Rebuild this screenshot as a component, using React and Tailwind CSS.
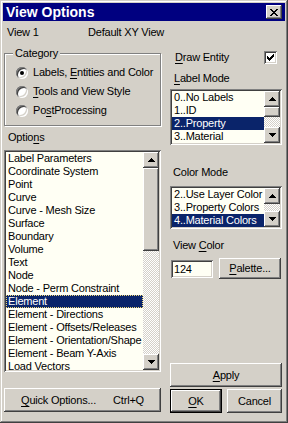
import React from 'react';

const RAISED =
  'shadow-[inset_-1px_-1px_#404040,inset_1px_1px_#ffffff,inset_-2px_-2px_#808080,inset_2px_2px_#d4d0c8]';
const SUNKEN =
  'shadow-[inset_1px_1px_#808080,inset_-1px_-1px_#ffffff,inset_2px_2px_#404040,inset_-2px_-2px_#d4d0c8]';
const CHECKER =
  'bg-[repeating-conic-gradient(#d4d0c8_0_25%,#ffffff_0_50%)] bg-[length:2px_2px]';

function Arrow({ dir }) {
  const rows = dir === 'up' ? [[3, 0, 1], [2, 1, 3], [1, 2, 5], [0, 3, 7]] : [[0, 0, 7], [1, 1, 5], [2, 2, 3], [3, 3, 1]];
  return (
    <svg width="7" height="4" viewBox="0 0 7 4" shapeRendering="crispEdges">
      {rows.map(([x, y, w]) => (
        <rect key={y} x={x} y={y} width={w} height="1" fill="#000" />
      ))}
    </svg>
  );
}

function ScrollBtn({ dir }) {
  return (
    <div className={`w-[16px] h-[16px] shrink-0 bg-[#d4d0c8] flex items-center justify-center ${RAISED}`}>
      <Arrow dir={dir} />
    </div>
  );
}

function ScrollBar({ thumb }) {
  return (
    <div className="w-[16px] flex flex-col shrink-0">
      <ScrollBtn dir="up" />
      {thumb > 0 && <div className={`w-[16px] bg-[#d4d0c8] shrink-0 ${RAISED}`} style={{ height: thumb }} />}
      <div className={`flex-1 ${CHECKER}`} />
      <ScrollBtn dir="down" />
    </div>
  );
}

function ListBox({ items, sel, focus, height, thumb }) {
  return (
    <div className={`bg-[#fffff4] p-[2px] flex ${SUNKEN}`} style={{ height }}>
      <div className="flex-1 overflow-hidden">
        {items.map((t) => (
          <div
            key={t}
            className={`h-[13px] leading-[13px] pl-[2px] whitespace-nowrap ${
              t === sel ? 'bg-[#0a246a] text-white' : 'text-black'
            } ${t === sel && focus ? 'outline-1 outline-dotted -outline-offset-1 outline-[#f0d878]' : ''}`}
          >
            {t}
          </div>
        ))}
      </div>
      <ScrollBar thumb={thumb} />
    </div>
  );
}

function Button({ children, className = '', def }) {
  return (
    <div className={`${def ? 'border border-black' : ''} ${className}`}>
      <div className={`h-full w-full bg-[#d4d0c8] flex items-center justify-center ${RAISED}`}>{children}</div>
    </div>
  );
}

function Radio({ checked, children }) {
  return (
    <div className="h-[13px] flex items-center">
      <div className={`w-[12px] h-[12px] rounded-full bg-white flex items-center justify-center ${SUNKEN}`}>
        {checked && <div className="w-[4px] h-[4px] rounded-full bg-black" />}
      </div>
      <span className="ml-[5px] leading-[13px]">{children}</span>
    </div>
  );
}

const U = ({ children }) => <span className="underline underline-offset-[2px]">{children}</span>;

const options = [
  'Label Parameters',
  'Coordinate System',
  'Point',
  'Curve',
  'Curve - Mesh Size',
  'Surface',
  'Boundary',
  'Volume',
  'Text',
  'Node',
  'Node - Perm Constraint',
  'Element',
  'Element - Directions',
  'Element - Offsets/Releases',
  'Element - Orientation/Shape',
  'Element - Beam Y-Axis',
  'Load Vectors',
];

export default function App() {
  return (
    <div
      className={`w-[288px] h-[423px] bg-[#d4d0c8] p-[3px] flex flex-col text-[11px] tracking-[-0.2px] text-black font-['Liberation_Sans',Arial,sans-serif] shadow-[inset_-1px_-1px_#404040,inset_1px_1px_#d4d0c8,inset_-2px_-2px_#808080,inset_2px_2px_#ffffff] overflow-hidden`}
    >
      <div className="h-[18px] bg-[#000080] flex items-center justify-between pl-[3px] pr-[3px] shrink-0">
        <span className="text-white font-bold text-[14px] leading-[18px] tracking-normal">View Options</span>
        <div className={`w-[16px] h-[14px] bg-[#d4d0c8] flex items-center justify-center ${RAISED}`}>
          <svg width="8" height="7" viewBox="0 0 8 7" shapeRendering="crispEdges">
            {[[0, 0], [6, 0], [1, 1], [5, 1], [2, 2], [4, 2], [3, 3], [2, 4], [4, 4], [1, 5], [5, 5], [0, 6], [6, 6]].map(
              ([x, y]) => (
                <rect key={`${x}-${y}`} x={x} y={y} width="2" height="1" fill="#000" />
              )
            )}
          </svg>
        </div>
      </div>

      <div className="flex flex-col pl-[1px]">
        <div className="mt-[5px] h-[13px] leading-[13px] flex">
          <span className="w-[84px] pl-[3px]">View 1</span>
          <span>Default XY View</span>
        </div>

        <div className="flex">
          {/* left column */}
          <div className="w-[157px] flex flex-col">
            <div className="relative mt-[14px] h-[73px] border border-[#808080] shadow-[inset_1px_1px_#ffffff,1px_1px_#ffffff] pt-[12px] pl-[11px] flex flex-col gap-[6px]">
              <span className="absolute left-[8px] -top-[7px] px-[2px] bg-[#d4d0c8] leading-[13px]">Category</span>
              <Radio checked>
                Labels, <U>E</U>ntities and Color
              </Radio>
              <Radio>
                <U>T</U>ools and View Style
              </Radio>
              <Radio>
                Po<U>s</U>tProcessing
              </Radio>
            </div>
            <div className="mt-[5px] h-[13px] leading-[13px] pl-[4px]">
              Optio<U>n</U>s
            </div>
            <div className="mt-[6px]">
              <ListBox items={options} sel="Element" focus height={222} thumb={83} />
            </div>
            <Button className="mt-[16px] h-[24px]">
              <span>
                <U>Q</U>uick Options...
              </span>
              <span className="ml-[17px]">Ctrl+Q</span>
            </Button>
          </div>

          {/* right column */}
          <div className="ml-[9px] w-[112px] flex flex-col">
            <div className="mt-[12px] h-[13px] flex items-center justify-between pl-[5px] pr-[5px]">
              <span className="leading-[13px]">
                <U>D</U>raw Entity
              </span>
              <div className={`w-[13px] h-[13px] bg-white flex items-center justify-center ${SUNKEN}`}>
                <svg width="7" height="7" viewBox="0 0 7 7" shapeRendering="crispEdges">
                  <path d="M6 0h1v1h-1zM5 1h2v1h-2zM0 2h1v1h-1zM4 2h3v1h-3zM0 3h2v1h-2zM3 3h3v1h-3zM0 4h5v1h-5zM1 5h3v1h-3zM2 6h1v1h-1z" fill="#000" />
                </svg>
              </div>
            </div>
            <div className="mt-[8px] h-[13px] leading-[13px] pl-[4px]">
              <U>L</U>abel Mode
            </div>
            <div className="mt-[4px]">
              <ListBox items={['0..No Labels', '1..ID', '2..Property', '3..Material']} sel="2..Property" height={56} thumb={10} />
            </div>
            <div className="mt-[21px] h-[13px] leading-[13px] pl-[3px]">Color Mode</div>
            <div className="mt-[7px]">
              <ListBox
                items={['2..Use Layer Color', '3..Property Colors', '4..Material Colors']}
                sel="4..Material Colors"
                height={43}
                thumb={0}
              />
            </div>
            <div className="mt-[10px] h-[13px] leading-[13px] pl-[3px]">
              View <U>C</U>olor
            </div>
            <div className="mt-[6px] flex items-center">
              <div className={`ml-[1px] w-[42px] h-[18px] bg-[#fffff4] pl-[3px] leading-[18px] ${SUNKEN}`}>124</div>
              <Button className="ml-[6px] w-[62px] h-[21px]">
                <span>
                  <U>P</U>alette...
                </span>
              </Button>
            </div>
            <Button className="mt-[84px] h-[24px]">
              <span>
                <U>A</U>pply
              </span>
            </Button>
            <div className="mt-[2px] flex">
              <Button def className="w-[52px] h-[24px]">
                <span>
                  <U>O</U>K
                </span>
              </Button>
              <Button className="ml-[5px] w-[55px] h-[24px]">
                <span>Cancel</span>
              </Button>
            </div>
          </div>
        </div>
      </div>
    </div>
  );
}
